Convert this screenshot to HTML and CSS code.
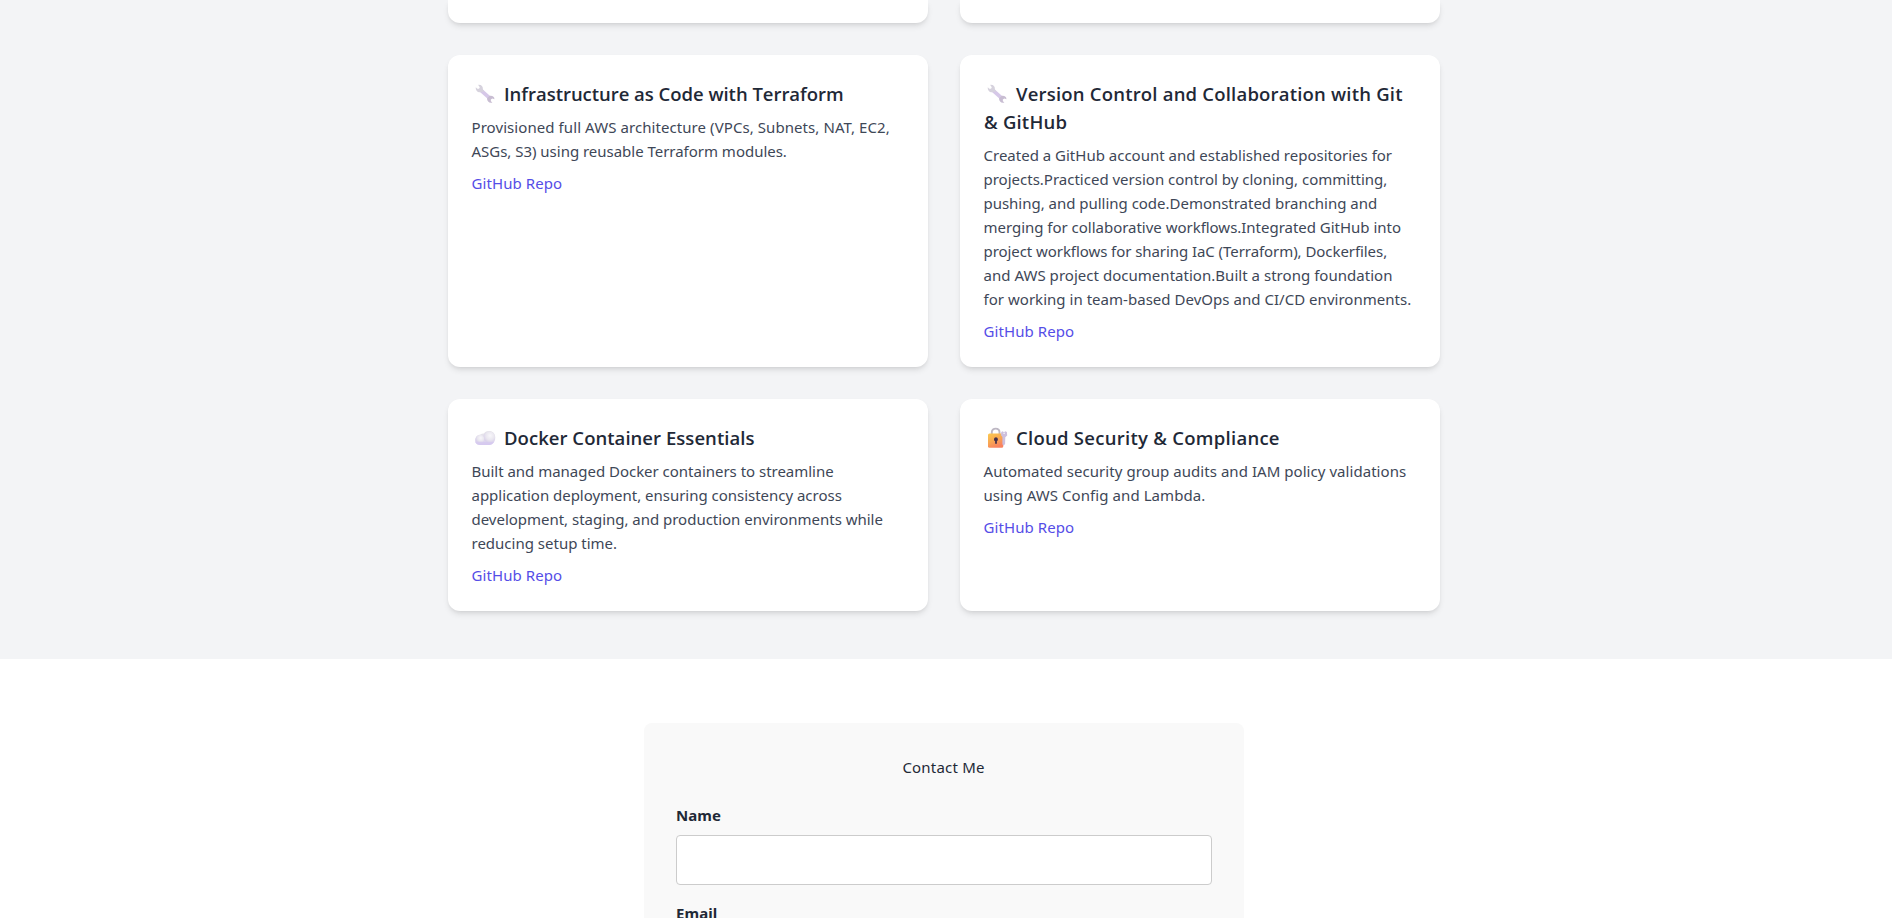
FILE: index.html
```
<!DOCTYPE html>
<html lang="en">
<head>
<meta charset="utf-8">
<title>Projects</title>
<link rel="stylesheet" href="styles.css">
</head>
<body>
<svg class="defs" width="0" height="0" aria-hidden="true">
  <defs>
    <linearGradient id="mist" x1="0" y1="0" x2="0" y2="1">
      <stop offset="0" stop-color="#e4e3e6"/><stop offset=".5" stop-color="#e6e2ee"/><stop offset="1" stop-color="#d3c6ee"/>
    </linearGradient>
    <radialGradient id="puff" cx=".58" cy=".38" r=".62">
      <stop offset="0" stop-color="#f8f7fa"/><stop offset=".6" stop-color="#e9e6ef"/><stop offset="1" stop-color="#d8cfea"/>
    </radialGradient>
    <linearGradient id="brass" x1="0" y1="0" x2=".5" y2="1">
      <stop offset="0" stop-color="#fbc94f"/><stop offset=".5" stop-color="#f9ab52"/><stop offset="1" stop-color="#f8825f"/>
    </linearGradient>
    <symbol id="wrench" viewBox="0 0 32 24">
      <path d="M8.4 7.8 18 16.4" stroke="#d6c8e8" stroke-width="3.8" fill="none"/>
      <path d="M6.2 2.9 7.8 5.2 7 6.7 5.3 6.8 3.8 5.2C3.4 8.2 5.4 10.6 8.6 10.3L12.4 9.2 10.9 7.6C11.2 4.6 9.3 2.6 6.2 2.9Z" fill="#d6d2dd"/>
      <path d="M15 16.6 17.4 13.9C20.2 13.2 22.7 14.9 22.4 17.2L20.4 16.4 18.8 17.4 18.9 19.3 20.4 20.5C17.6 21.7 15.1 19.6 15 16.6Z" fill="#c8bdd2"/>
    </symbol>
    <symbol id="cloud" viewBox="0 0 32 24">
      <path d="M8 19C5 19 3 17 3 14.3 3 11.4 5.2 9 8.1 8.7 9.3 7.7 10.6 7.3 12 7.4 13.2 5.8 15 5 17 5 20.7 5 23.3 7.7 23.3 11.5 23.3 16 20.7 19 17 19Z" fill="url(#mist)"/>
      <circle cx="17.2" cy="11" r="5.8" fill="url(#puff)"/>
      <circle cx="8" cy="13" r="4.3" fill="url(#puff)"/>
      <path d="M3.4 16C7 15.3 12 16.5 21.8 16 20.6 18.1 19 19 17 19H8C5.8 19 4 17.9 3.4 16Z" fill="#d6caef" opacity=".75"/>
    </symbol>
    <symbol id="lock" viewBox="0 0 32 24">
      <path d="M7.8 8V6.2C7.8 1.4 15.5 1.4 15.5 6.2V8" fill="none" stroke="#bdb7c3" stroke-width="1.9"/>
      <rect x="4" y="7.6" width="15.2" height="14.1" rx="1.5" fill="url(#brass)"/>
      <path d="M17.3 6 18.6 5.3 20 6.2 21.3 5.3 22.9 6.1 23.2 9.4 21.3 11.3 21.1 17.9 19.4 19.7 18.4 18.3 18.4 11.1 17 9.2Z" fill="#cdbfdd"/>
      <circle cx="20.1" cy="7.3" r=".7" fill="#fff"/>
      <path d="M10 13.4C10 10.6 13.9 10.6 13.9 13.4 13.9 14.3 13.4 14.8 12.9 15.1V17.8H11.1V15.1C10.4 14.8 10 14.3 10 13.4Z" fill="#46304b"/>
    </symbol>
  </defs>
</svg>

<section class="projects">
  <div class="grid">
    <article class="card card-cut"></article>
    <article class="card card-cut"></article>

    <article class="card">
      <h3 class="title snug"><svg class="icon"><use href="#wrench"/></svg>Infrastructure as Code with Terraform</h3>
      <p class="text">
        <span class="line w3">Provisioned full AWS architecture (VPCs, Subnets, NAT, EC2,</span>
        <span class="line n1">ASGs, S3) using reusable Terraform modules.</span>
      </p>
      <a class="link" href="#">GitHub Repo</a>
    </article>

    <article class="card">
      <h3 class="title wide"><svg class="icon"><use href="#wrench"/></svg>Version Control and Collaboration with Git &amp;&nbsp;GitHub</h3>
      <p class="text">
        <span class="line">Created a GitHub account and established repositories for</span>
        <span class="line">projects.Practiced version control by cloning, committing,</span>
        <span class="line n1">pushing, and pulling code.Demonstrated branching and</span>
        <span class="line n1">merging for collaborative workflows.Integrated GitHub into</span>
        <span class="line n2">project workflows for sharing IaC (Terraform), Dockerfiles,</span>
        <span class="line w1">and AWS project documentation.Built a strong foundation</span>
        <span class="line w1">for working in team-based DevOps and CI/CD environments.</span>
      </p>
      <a class="link" href="#">GitHub Repo</a>
    </article>

    <article class="card">
      <h3 class="title"><svg class="icon"><use href="#cloud"/></svg>Docker Container Essentials</h3>
      <p class="text">
        <span class="line n1">Built and managed Docker containers to streamline</span>
        <span class="line n1">application deployment, ensuring consistency across</span>
        <span class="line n1">development, staging, and production environments while</span>
        <span class="line">reducing setup time.</span>
      </p>
      <a class="link" href="#">GitHub Repo</a>
    </article>

    <article class="card">
      <h3 class="title wider"><svg class="icon"><use href="#lock"/></svg>Cloud Security &amp; Compliance</h3>
      <p class="text">
        <span class="line w2">Automated security group audits and IAM policy validations</span>
        <span class="line w3">using AWS Config and Lambda.</span>
      </p>
      <a class="link" href="#">GitHub Repo</a>
    </article>
  </div>
</section>

<section class="contact">
  <form class="panel">
    <h2 class="heading">Contact Me</h2>
    <label class="label" for="name">Name</label>
    <input class="field" id="name" type="text">
    <label class="label" for="email">Email</label>
  </form>
</section>
</body>
</html>
```

FILE: styles.css
```
* { box-sizing: border-box; margin: 0; padding: 0; }

html, body { height: 100%; overflow: hidden; }

body {
  background: #fff;
  color: #1f2937;
  font: 15px/24px "Noto Sans", "Open Sans", sans-serif;
}

.defs { display: block; }

.projects {
  margin-right: 1px;
  padding: 0 4px 48px 0;
  background: #f3f4f6;
}

.grid {
  display: grid;
  grid-template-columns: 480px 480px;
  gap: 32px;
  justify-content: center;
}

.card {
  padding: 24px;
  border-radius: 12px;
  background: #fff;
  box-shadow: 0 4px 6px -1px rgba(0, 0, 0, .1), 0 2px 4px -2px rgba(0, 0, 0, .1);
}

.card-cut {
  height: 23px;
  padding: 0;
  border-radius: 0 0 12px 12px;
}

.title {
  margin-bottom: 7px;
  padding-top: 1px;
  font: 600 18.5px/28px "Open Sans", "Noto Sans", sans-serif;
  letter-spacing: .04px;
}
.title.snug { letter-spacing: -.03px; }
.title.wide { letter-spacing: .2px; }
.title.wider { letter-spacing: .27px; }

.icon {
  display: inline-block;
  width: 32px;
  height: 24px;
  vertical-align: -5px;
}

.text { margin: 0 0 8px -.5px; color: #3e4757; }

.line { display: block; white-space: nowrap; }
.n1 { letter-spacing: -.02px; }
.n2 { letter-spacing: -.065px; }
.w1 { letter-spacing: .03px; }
.w2 { letter-spacing: .05px; }
.w3 { letter-spacing: .075px; }

.link {
  display: block;
  margin-left: -.5px;
  color: #554de7;
  letter-spacing: .08px;
  text-decoration: none;
}

.contact { padding: 64px 5px 0 0; }

.panel {
  width: 600px;
  height: 600px;
  margin: 0 auto;
  padding: 32px;
  border-radius: 8px;
  background: #f9f9f9;
}

.heading {
  margin: 0 1px 24px 0;
  font-size: 15px;
  font-weight: 400;
  letter-spacing: .2px;
  text-align: center;
}

.label {
  display: block;
  margin-bottom: 8px;
  font-weight: 700;
  letter-spacing: .05px;
}

.field {
  display: block;
  width: 536px;
  height: 50px;
  margin-bottom: 16px;
  border: 1px solid #ccc;
  border-radius: 4px;
  background: #fff;
}
```
